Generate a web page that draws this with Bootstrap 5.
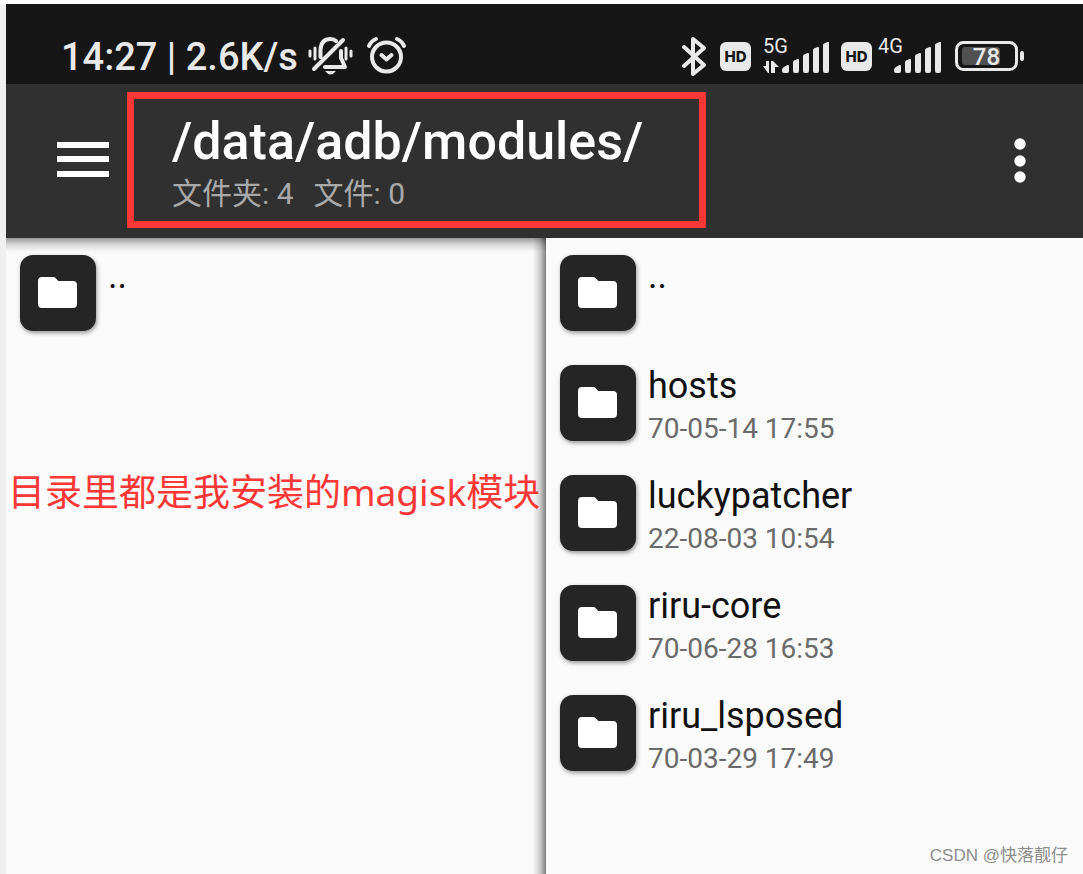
<!DOCTYPE html>
<html lang="zh-CN">
<head>
<meta charset="utf-8">
<meta name="viewport" content="width=device-width, initial-scale=1">
<title>/data/adb/modules/</title>
<link href="https://cdn.jsdelivr.net/npm/bootstrap@5.3.0/dist/css/bootstrap.min.css" rel="stylesheet">
<style>
  body { background: #efefef; border-top: 4px solid #fff; padding-left: 6px; font-family: Roboto, "Noto Sans CJK SC", sans-serif; }
  svg { display: block; flex: none; }
  .status-bar { height: 80px; padding: 24px 59px 0 55px; background: #161616; color: #e9e9e9; }
  .status-text { font-size: 38px; line-height: 56px; font-weight: 500; white-space: pre; padding-top: 2px; }
  .status-group { height: 56px; }
  .status-icon { margin-left: 10px; }
  .hd-mark { width: 31px; height: 29px; border-radius: 6px; background: #e9e9e9; color: #161616; font: 800 15px/29px Inter, sans-serif; text-align: center; }
  .signal { width: 67px; height: 38px; margin-left: 12px; }
  .signal-slim { width: 64px; margin-left: 6px; }
  .signal-label { font-size: 20px; line-height: 20px; position: absolute; left: 0; top: -1px; }
  .signal-bars { position: absolute; right: 0; bottom: 2px; }
  .signal-arrows { position: absolute; left: 0; bottom: 2px; }
  .app-bar { height: 154px; padding: 8px 53px 10px 51px; background: #303030; color: #fff; }
  .icon-btn { background: none; border: 0; padding: 0; }
  .path-box { width: 59.5%; height: 136px; margin-left: 18px; border: 7px solid #fc3837; padding: 12px 0 0 38px; }
  .path-name { font-size: 52px; line-height: 62px; font-weight: 500; margin: 0; white-space: nowrap; }
  .path-count { font-size: 30px; line-height: 42px; color: #a9a9a9; gap: 20px; }
  .panes { display: grid; grid-template-columns: 540fr 537fr; flex: 1; }
  .pane { background: #fafafa; padding: 17px 0 0 14px; }
  .pane-back { background: linear-gradient(to left, rgba(0,0,0,.5), rgba(0,0,0,.18) 6px, transparent 13px), linear-gradient(rgba(0,0,0,.38), rgba(0,0,0,.13) 7px, transparent 14px), #fafafa; }
  .file-row { height: 76px; margin-bottom: 34px; gap: 12px; color: #111; }
  .tile { width: 76px; height: 76px; flex: none; border-radius: 13px; background: #252525; padding: 22px 0 0 18px; box-shadow: 1px 2px 4px rgba(0,0,0,.4); }
  .file-name { font-size: 36px; line-height: 42px; }
  .file-date { font-size: 28px; line-height: 44px; color: #6b6b6b; }
  .remark { margin: 133px 0 0 -12px; font-family: "Noto Sans", "Noto Sans CJK SC", sans-serif; font-size: 37px; line-height: 56px; color: #fc3837; white-space: nowrap; }
  .credit { margin: auto 15px 6px 0; font-family: "Liberation Sans", "Noto Sans CJK SC", sans-serif; font-size: 17px; line-height: 24px; color: #8d8d8d; }
</style>
</head>
<body class="min-vh-100 d-flex flex-column">
<svg width="0" height="0" class="position-absolute" aria-hidden="true">
  <symbol id="folder" viewBox="0 0 39 31"><path fill="#fff" d="M4 0H15.500Q16.500 0 17.300 .8L20.300 4H35Q39 4 39 8V27Q39 31 35 31H4Q0 31 0 27V4Q0 0 4 0Z"/></symbol>
  <symbol id="bars" viewBox="0 0 48 31"><path fill="#e9e9e9" d="M0 28Q0 26 2 25L5.500 23Q7 22.500 7 24V29Q7 31 5 31H2Q0 31 0 29ZM11 20.500Q11 19 12 18.500L15.500 17Q17 16.500 17 18V29Q17 31 15 31H13Q11 31 11 29ZM21 14.500Q21 13 22 12.500L25.500 11Q27 10.500 27 12V29Q27 31 25 31H23Q21 31 21 29ZM31 8.500Q31 7 32 6.500L35.500 5Q37 4.500 37 6V29Q37 31 35 31H33Q31 31 31 29ZM41 3.500Q41 2 42 1.500L45.500 0Q47 -.5 47 1V29Q47 31 45 31H43Q41 31 41 29Z"/></symbol>
</svg>

<div class="status-bar d-flex justify-content-between">
  <div class="status-group d-flex align-items-center">
    <span class="status-text">14:27 | 2.6K/s</span>
    <svg class="status-icon" width="45" height="40" viewBox="0 0 45 40" fill="none" stroke="#e9e9e9" stroke-width="4" stroke-linecap="round" stroke-linejoin="round" aria-label="静音">
      <path d="M12.500 21V14Q13 3 22.500 3Q26 3 28 5M33 15V22L37 31H17M35 4L6 33"/>
      <path d="M2 15V20M7 12V23M38 12V23M43 15V20" stroke-width="3"/>
      <path d="M17 35H28Q22.500 42 17 35Z" fill="#e9e9e9" stroke="none"/>
    </svg>
    <svg style="margin-left:13px" width="41" height="40" viewBox="0 0 41 40" fill="none" stroke="#e9e9e9" stroke-linecap="round" stroke-linejoin="round" aria-label="闹钟">
      <circle cx="20.500" cy="21" r="14.500" stroke-width="4"/><path d="M15.500 19L20.500 23.500L25.500 19" stroke-width="4"/><path d="M3 10Q5 5 10 3M31 3Q36 5 38 10" stroke-width="4"/>
    </svg>
  </div>
  <div class="status-group d-flex align-items-center">
    <svg width="26" height="39" viewBox="0 0 26 39" fill="none" stroke="#e9e9e9" stroke-width="4" stroke-linecap="round" stroke-linejoin="round" aria-label="蓝牙"><path d="M3 10L23 28L12 37V2L23 11L3 29"/></svg>
    <span class="hd-mark" style="margin-left:13px">HD</span>
    <div class="signal position-relative">
      <span class="signal-label">5G</span>
      <svg class="signal-arrows" width="16" height="12" viewBox="0 0 16 12" fill="#e9e9e9"><path d="M0 5H3V0H6V12H5ZM8 0H10L16 6H12V12H8Z"/></svg>
      <svg class="signal-bars" width="48" height="31"><use href="#bars"/></svg>
    </div>
    <span class="hd-mark" style="margin-left:11px">HD</span>
    <div class="signal signal-slim position-relative">
      <span class="signal-label">4G</span>
      <svg class="signal-bars" width="48" height="31"><use href="#bars"/></svg>
    </div>
    <svg style="margin-left:13px" width="69" height="30" viewBox="0 0 69 30">
      <rect x="1.500" y="1.500" width="60" height="27" rx="7" fill="none" stroke="#e9e9e9" stroke-width="3"/>
      <rect x="7" y="6" width="38" height="18" rx="3" fill="#505050"/><rect x="65" y="10" width="4" height="10" rx="2" fill="#e9e9e9"/>
      <text x="31.500" y="24" text-anchor="middle" font-family="Roboto, sans-serif" font-size="24" font-weight="500" fill="#e9e9e9">78</text>
    </svg>
  </div>
</div>

<header class="app-bar d-flex align-items-start">
  <button class="icon-btn align-self-center" type="button" aria-label="菜单">
    <svg width="52" height="36" viewBox="0 0 52 36" fill="#fff"><path d="M0 0H52V6H0ZM0 14H52V20H0ZM0 29H52V35H0Z"/></svg>
  </button>
  <div class="path-box">
    <h1 class="path-name">/data/adb/modules/</h1>
    <div class="path-count d-flex"><span>文件夹: 4</span><span>文件: 0</span></div>
  </div>
  <button class="icon-btn align-self-center ms-auto" type="button" aria-label="更多">
    <svg width="20" height="46" viewBox="0 0 20 46" fill="#fff"><circle cx="10" cy="7" r="5.700"/><circle cx="10" cy="24" r="5.700"/><circle cx="10" cy="40" r="5.700"/></svg>
  </button>
</header>

<main class="panes">
  <section class="pane pane-back">
    <a href="#" class="file-row d-flex text-decoration-none"><span class="tile"><svg width="39" height="31"><use href="#folder"/></svg></span><span class="file-name">..</span></a>
    <p class="remark">目录里都是我安装的magisk模块</p>
  </section>
  <section class="pane d-flex flex-column">
    <a href="#" class="file-row d-flex text-decoration-none"><span class="tile"><svg width="39" height="31"><use href="#folder"/></svg></span><span class="file-name">..</span></a>
    <a href="#" class="file-row d-flex text-decoration-none"><span class="tile"><svg width="39" height="31"><use href="#folder"/></svg></span><span class="d-flex flex-column"><span class="file-name">hosts</span><span class="file-date">70-05-14 17:55</span></span></a>
    <a href="#" class="file-row d-flex text-decoration-none"><span class="tile"><svg width="39" height="31"><use href="#folder"/></svg></span><span class="d-flex flex-column"><span class="file-name">luckypatcher</span><span class="file-date">22-08-03 10:54</span></span></a>
    <a href="#" class="file-row d-flex text-decoration-none"><span class="tile"><svg width="39" height="31"><use href="#folder"/></svg></span><span class="d-flex flex-column"><span class="file-name">riru-core</span><span class="file-date">70-06-28 16:53</span></span></a>
    <a href="#" class="file-row d-flex text-decoration-none"><span class="tile"><svg width="39" height="31"><use href="#folder"/></svg></span><span class="d-flex flex-column"><span class="file-name">riru_lsposed</span><span class="file-date">70-03-29 17:49</span></span></a>
    <div class="credit align-self-end">CSDN @快落靓仔</div>
  </section>
</main>
<script src="https://cdn.jsdelivr.net/npm/bootstrap@5.3.0/dist/js/bootstrap.bundle.min.js"></script>
</body>
</html>
